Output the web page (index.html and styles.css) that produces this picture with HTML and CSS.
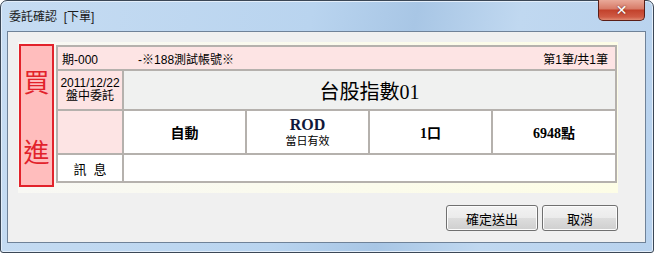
FILE: index.html
```html
<!DOCTYPE html>
<html lang="zh-Hant">
<head>
    <meta charset="UTF-8">
    <title>委託確認 [下單]</title>
    <link rel="stylesheet" href="styles.css">
</head>
<body>
    <div class="window">
        <div class="titlebar">
            <span class="title">委託確認&nbsp; [下單]</span>
            <button class="close-btn">&#x2715;</button>
        </div>
        <div class="client">
            <div class="panel">
                <div class="side">
                    <span>買</span>
                    <span>進</span>
                </div>
                <div class="order">
                    <div class="cell head">
                        <span class="acct">期-000</span>
                        <span class="acct-name">-※188測試帳號※</span>
                        <span class="count">第1筆/共1筆</span>
                    </div>
                    <div class="cell label date">2011/12/22<br>盤中委託</div>
                    <div class="cell product">台股指數01</div>
                    <div class="cell label"></div>
                    <div class="cell value">自動</div>
                    <div class="cell value rod">
                        <span class="rod-code">ROD</span>
                        <span class="rod-text">當日有效</span>
                    </div>
                    <div class="cell value">1口</div>
                    <div class="cell value">6948點</div>
                    <div class="cell msg-label">訊 息</div>
                    <div class="cell msg"></div>
                </div>
            </div>
            <div class="actions">
                <button class="btn btn-ok">確定送出</button>
                <button class="btn btn-cancel">取消</button>
            </div>
        </div>
    </div>
</body>
</html>
```

FILE: styles.css
```css
body {
    margin: 0;
    font-family: "Liberation Sans", "Noto Sans CJK TC", sans-serif;
    font-size: 12px;
    color: #000;
    background: #fff;
}
.window {
    box-sizing: border-box;
    width: 654px;
    height: 253px;
    padding: 0 7px 9px 6px;
    border: 1px solid #3b4756;
    border-radius: 7px 7px 3px 3px;
    background: linear-gradient(100deg, #c6dcf2 0%, #b9d4ef 45%, #a8c6e5 60%, #c0d8f0 75%, #b8d2ee 100%);
    box-shadow: inset 0 0 0 1px #e3eefa;
    display: flex;
    flex-direction: column;
}
.titlebar {
    height: 30px;
    display: flex;
    align-items: flex-start;
}
.title {
    padding: 8px 0 0 2px;
    line-height: 16px;
    font-size: 12px;
    color: #1b1b1b;
}
.close-btn {
    margin: -1px 1px 0 auto;
    width: 47px;
    height: 21px;
    border: 1px solid #5a1e17;
    border-top: none;
    border-radius: 0 0 5px 5px;
    background: linear-gradient(to bottom, #e9a999 0%, #d77a67 45%, #c2412b 50%, #cf5b45 85%, #e08a72 100%);
    color: #fff;
    font-family: "DejaVu Sans", sans-serif;
    font-size: 14px;
    font-weight: bold;
    line-height: 18px;
    padding: 0;
    text-shadow: 0 0 2px #5a1e17;
}
.client {
    flex: 1;
    border: 1px solid #6f8298;
    background: #f0f0f0;
    padding: 10px 0 0 10px;
}
.panel {
    width: 600px;
    height: 151px;
    box-sizing: border-box;
    padding: 2px 1px;
    display: flex;
    align-items: flex-start;
    gap: 2px;
    background: linear-gradient(to right, #f8f8f4, #fdfde6);
}
.side {
    box-sizing: border-box;
    width: 35px;
    height: 143px;
    border: 2px solid #e2222b;
    background: #ffbdbd;
    color: #e2222b;
    font-family: "Noto Sans CJK TC", sans-serif;
    font-size: 26px;
    line-height: 26px;
    display: flex;
    flex-direction: column;
    align-items: center;
    justify-content: center;
    gap: 44px;
}
.order {
    margin-top: 1px;
    width: 561px;
    height: 138px;
    box-sizing: border-box;
    padding: 2px;
    background: #b5b1ad;
    display: grid;
    grid-template-columns: 64px 121px 121px 121px 122px;
    grid-template-rows: 22px 38px 42px 26px;
    gap: 2px;
}
.cell {
    background: #fff;
    display: flex;
    align-items: center;
    justify-content: center;
}
.head {
    grid-column: 1 / -1;
    background: #fde4e4;
    justify-content: flex-start;
    padding: 0 7px 0 4px;
}
.acct-name {
    margin-left: 40px;
}
.count {
    margin-left: auto;
}
.label {
    background: #fde4e4;
}
.date {
    flex-direction: column;
    text-align: center;
    line-height: 13px;
}
.product {
    grid-column: 2 / -1;
    background: #f0f1f0;
    font-family: "Liberation Serif", "Noto Sans CJK TC", serif;
    font-size: 20px;
}
.value {
    font-family: "Liberation Serif", "Noto Sans CJK TC", serif;
    font-size: 14px;
    font-weight: bold;
}
.rod {
    flex-direction: column;
}
.rod-code {
    font-size: 16px;
    line-height: 16px;
    color: #10183a;
}
.rod-text {
    font-family: "Noto Sans CJK TC", sans-serif;
    font-size: 11px;
    font-weight: normal;
    line-height: 14px;
}
.msg-label {
    font-family: "Noto Sans CJK TC", sans-serif;
    font-size: 13px;
    word-spacing: 4px;
}
.msg {
    grid-column: 2 / -1;
}
.actions {
    width: 600px;
    margin-top: 12px;
    display: flex;
    justify-content: flex-end;
    gap: 4px;
}
.btn {
    height: 26px;
    border: 1px solid #707070;
    border-radius: 3px;
    background: linear-gradient(to bottom, #f3f3f3 0%, #ebebeb 50%, #dddddd 51%, #cfcfcf 100%);
    box-shadow: inset 0 0 0 1px #fcfcfc;
    font-family: "Noto Sans CJK TC", sans-serif;
    font-size: 13px;
    color: #000;
    padding: 0;
}
.btn-ok {
    width: 92px;
}
.btn-cancel {
    width: 76px;
}
```
